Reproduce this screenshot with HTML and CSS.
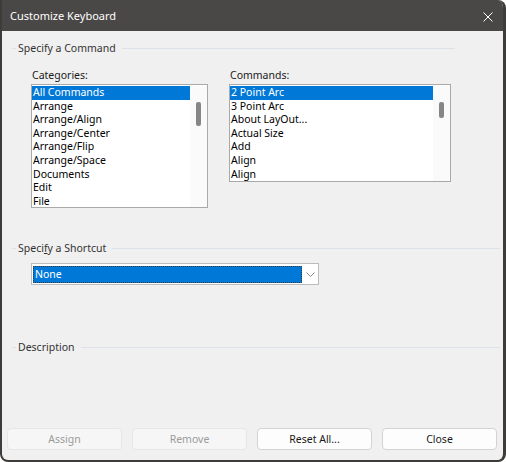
FILE: index.html
```html
<!DOCTYPE html>
<html>
<head>
<meta charset="utf-8">
<link rel="stylesheet" href="styles.css">
</head>
<body>
<div class="window">
  <div class="titlebar">
    <span class="title">Customize Keyboard</span>
    <svg class="close" width="10" height="10" viewBox="0 0 10 10"><path d="M0.5 0.5L9.5 9.5M9.5 0.5L0.5 9.5" stroke="#fff" stroke-width="1" fill="none"/></svg>
  </div>
  <div class="client">
    <div class="group-head cmd-head"><span class="dash"></span><span class="gtext">Specify a Command</span><span class="gline"></span></div>
    <div class="lists">
      <div class="col">
        <div class="label">Categories:</div>
        <div class="listbox lb-cat">
          <ul class="items">
            <li class="sel">All Commands</li>
            <li>Arrange</li>
            <li>Arrange/Align</li>
            <li>Arrange/Center</li>
            <li>Arrange/Flip</li>
            <li>Arrange/Space</li>
            <li>Documents</li>
            <li>Edit</li>
            <li>File</li>
          </ul>
          <div class="vscroll"><div class="thumb thumb-cat"></div></div>
        </div>
      </div>
      <div class="col">
        <div class="label">Commands:</div>
        <div class="listbox lb-cmd">
          <ul class="items">
            <li class="sel">2 Point Arc</li>
            <li>3 Point Arc</li>
            <li>About LayOut...</li>
            <li>Actual Size</li>
            <li>Add</li>
            <li>Align</li>
            <li>Align</li>
          </ul>
          <div class="vscroll"><div class="thumb thumb-cmd"></div></div>
        </div>
      </div>
    </div>
    <div class="group-head sc-head"><span class="dash"></span><span class="gtext">Speci<u>f</u>y a Shortcut</span><span class="gline"></span></div>
    <div class="combo">
      <div class="combo-val">None</div>
      <div class="combo-btn"><svg width="9" height="5" viewBox="0 0 9 5"><path d="M0.5 0.5L4.5 4.5L8.5 0.5" fill="none" stroke="#8a8a8a" stroke-width="1"/></svg></div>
    </div>
    <div class="group-head desc-head"><span class="dash"></span><span class="gtext">Description</span><span class="gline"></span></div>
    <div class="buttons">
      <button class="btn" disabled>Assign</button>
      <button class="btn" disabled>Remove</button>
      <button class="btn">Reset All...</button>
      <button class="btn">Close</button>
    </div>
  </div>
</div>
</body>
</html>
```
FILE: styles.css
```css
* { box-sizing: border-box; }
body {
  margin: 0;
  background: #ffffff;
  font-family: "Noto Sans", "Segoe UI", sans-serif;
  font-size: 10.5px;
}
.window {
  width: 506px;
  height: 462px;
  display: flex;
  flex-direction: column;
  border: 2px solid #3d3c3b;
  border-top: 0;
  border-right-width: 3px;
  border-radius: 0 8px 8px 8px;
  overflow: hidden;
  background: #f0f0f0;
}
.titlebar {
  height: 31px;
  flex: none;
  background: #4a4846;
  color: #ffffff;
  display: flex;
  align-items: center;
  justify-content: space-between;
  padding-left: 8px;
}
.title { font-size: 11px; }
.close { margin-right: 10px; margin-top: 2px; }
.client {
  flex: 1;
  display: flex;
  flex-direction: column;
  padding-top: 10px;
}
.group-head {
  display: flex;
  align-items: center;
  height: 14px;
  padding-left: 10px;
}
.dash { width: 4px; height: 1px; background: #dce2e8; margin-right: 2px; }
.gtext { color: #333333; line-height: 14px; white-space: nowrap; }
.gline { flex: 1; height: 1px; background: #dce2e8; margin-left: 6px; }
.cmd-head { padding-right: 48px; }
.sc-head { padding-right: 3px; margin-top: 33px; }
.desc-head { padding-right: 3px; margin-top: 55px; }
.lists {
  display: flex;
  gap: 21px;
  margin-top: 13px;
  padding-left: 29px;
  align-items: flex-start;
}
.label {
  height: 14px;
  line-height: 14px;
  padding-left: 1px;
  margin-bottom: 2px;
  color: #1a1a1a;
}
.listbox {
  border: 1px solid #a9a9a9;
  background: #ffffff;
  display: flex;
  padding-top: 1px;
}
.lb-cat { width: 177px; height: 124px; }
.lb-cmd { width: 222px; height: 98px; }
.items {
  list-style: none;
  margin: 0;
  padding: 0;
  flex: 1;
  overflow: hidden;
}
.items li {
  height: 13.6px;
  line-height: 13.6px;
  padding-left: 1px;
  white-space: nowrap;
  color: #000000;
}
.items li.sel { background: #0078d7; color: #ffffff; }
.vscroll { width: 17px; background: #fafafa; }
.thumb {
  width: 5px;
  margin: 16px 0 0 6px;
  background: #868686;
  border-radius: 2px;
}
.thumb-cat { height: 24px; }
.thumb-cmd { height: 16px; }
.combo {
  margin: 8px 0 0 29px;
  width: 288px;
  height: 22px;
  border: 1px solid #bcbcbc;
  background: #ffffff;
  display: flex;
  padding: 2px 0 1px 1px;
}
.combo-val {
  flex: 1;
  background: #0078d7;
  color: #ffffff;
  outline: 1px dotted #3a3a3a;
  outline-offset: -1px;
  padding-left: 2px;
  line-height: 17px;
}
.combo-btn {
  width: 16px;
  display: flex;
  align-items: center;
  justify-content: center;
}
.buttons {
  margin-top: auto;
  display: flex;
  gap: 10px;
  padding: 0 0 10px 5px;
}
.btn {
  width: 115px;
  height: 22px;
  border: 1px solid #d3d3d3;
  border-radius: 4px;
  background: #fdfdfd;
  font-family: inherit;
  font-size: 10.5px;
  color: #1a1a1a;
  padding: 0;
}
.btn:disabled {
  background: #f6f6f6;
  border-color: #e6e6e6;
  color: #9b9b9b;
}
```
